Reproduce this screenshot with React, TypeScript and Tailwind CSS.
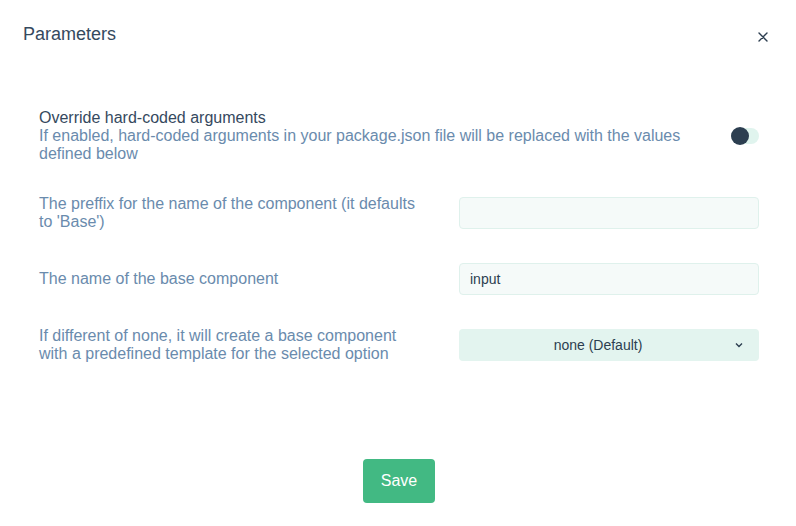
import React from "react";

export default function App() {
  return (
    <div className="w-[796px] h-[526px] bg-white flex flex-col font-['Liberation_Sans',Arial,sans-serif] text-[#2c3e50]">
      <div className="flex items-center justify-between h-[68px] pl-[23px] pr-[28px]">
        <div className="text-[18px] leading-[22px] text-[#35495e]">Parameters</div>
        <svg width="10" height="10" viewBox="0 0 10 10" className="mt-[5px]">
          <path d="M1 1 L9 9 M9 1 L1 9" stroke="#2c3e50" strokeWidth="1.4" strokeLinecap="round" />
        </svg>
      </div>
      <div className="flex flex-col gap-8 pl-[39px] pr-[37px] pt-[41px]">
        <div className="flex items-center">
          <div className="flex-1 text-[16px] leading-[18px]">
            <div className="text-[#35495e]">Override hard-coded arguments</div>
            <div className="text-[#6a8bad] pr-[40px]">
              If enabled, hard-coded arguments in your package.json file will be replaced with the values defined below
            </div>
          </div>
          <div className="relative w-[28px] h-[16px] rounded-full bg-[#e0f4ee]">
            <div className="absolute left-0 top-[-1px] w-[18px] h-[18px] rounded-full bg-[#2c3e50]" />
          </div>
        </div>
        <div className="flex items-center">
          <div className="w-[385px] text-[16px] leading-[18px] text-[#6a8bad]">
            The preffix for the name of the component (it defaults to 'Base')
          </div>
          <div className="ml-auto w-[300px] h-[32px] rounded-[4px] border border-[#dff1ec] bg-[#f5faf9]" />
        </div>
        <div className="flex items-center">
          <div className="w-[385px] text-[16px] leading-[18px] text-[#6a8bad]">The name of the base component</div>
          <div className="ml-auto w-[300px] h-[32px] rounded-[4px] border border-[#dff1ec] bg-[#f5faf9] flex items-center px-[10px] text-[14px] text-[#2c3e50]">
            input
          </div>
        </div>
        <div className="flex items-center">
          <div className="w-[385px] text-[16px] leading-[18px] text-[#6a8bad]">
            If different of none, it will create a base component with a predefined template for the selected option
          </div>
          <div className="ml-auto relative w-[300px] h-[32px] rounded-[4px] bg-[#e3f4ef] flex items-center justify-center text-[14px] text-[#2c3e50]">
            <span className="mr-[22px]">none (Default)</span>
            <svg width="8" height="6" viewBox="0 0 8 6" className="absolute right-[16px] top-[13px]">
              <path d="M1 1.5 L4 4.5 L7 1.5" stroke="#2c3e50" strokeWidth="1.4" fill="none" />
            </svg>
          </div>
        </div>
      </div>
      <div className="flex justify-center mt-[96px] pl-[2px]">
        <button className="w-[72px] h-[44px] rounded-[4px] bg-[#42b983] text-white text-[16px]">Save</button>
      </div>
    </div>
  );
}
